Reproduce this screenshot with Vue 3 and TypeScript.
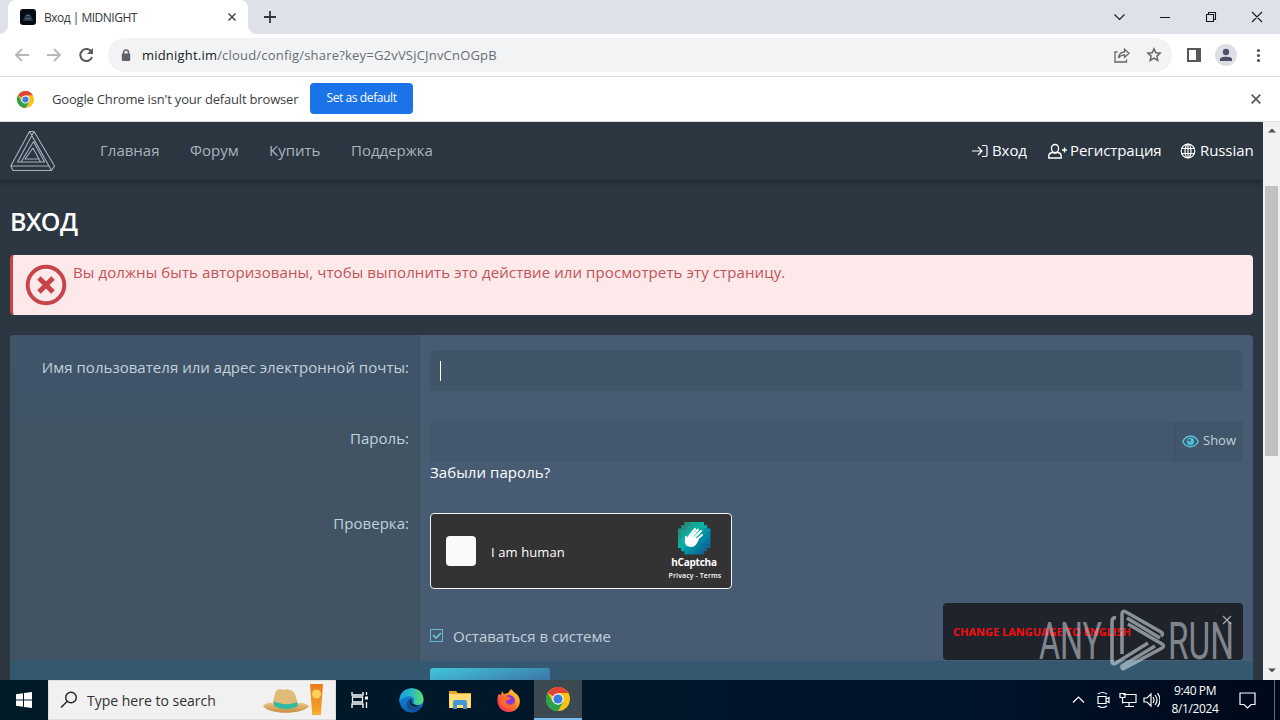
<script setup lang="ts">
const nav = [
  { label: 'Главная', cls: 'n1' },
  { label: 'Форум', cls: 'n2' },
  { label: 'Купить', cls: 'n3' },
  { label: 'Поддержка', cls: 'n4' },
]
const hPixels = [
  '..aabbcc..', '.aabbccdd.', 'aabbccddee', 'abbccddeef', 'abccddeeff',
  'bccddeeffg', 'bcddeeffgg', 'cddeeffggh', '.deeffggh.', '..effggh..',
].flatMap((row, y) => [...row].map((c, x) => ({ c, x, y }))).filter(p => p.c !== '.')
const shades: Record<string, string> = {
  a: '#259080', b: '#16a694', c: '#0eb4a4', d: '#05b3ad', e: '#0095a6', f: '#0086a2', g: '#0874a0', h: '#14648e',
}
</script>

<template>
  <div class="screen">
    <header class="tabstrip">
      <div class="tab">
        <svg class="favicon" width="16" height="16" viewBox="0 0 16 16"><rect width="16" height="16" rx="3" fill="#060c14" /><path d="M4 9c1-5 7-5 8 0l1 3H3z" fill="#243645" /><path d="M6 7q2-2 4 0M5 10q3-1 6 0" stroke="#587285" fill="none" /></svg>
        <span class="tabtitle">Вход | MIDNIGHT</span>
        <svg class="tabclose" width="8" height="8" viewBox="0 0 8 8"><path d="M.5.5l7 7m0-7l-7 7" stroke="#45494d" stroke-width="1.5" /></svg>
      </div>
      <svg class="plus" width="12" height="12" viewBox="0 0 12 12"><path d="M6 0v12M0 6h12" stroke="#34373a" stroke-width="1.8" /></svg>
      <svg class="wincontrols" width="154" height="14" viewBox="0 0 154 14"><g fill="none" stroke="#17191c" stroke-width="1.1"><path d="M1.500 4.500l5 5 5-5M47 7.500h10M93.500 4.500h7v7h-7zM95.500 4.500v-2h7v7h-2M139 2l10 10m0-10l-10 10" /></g></svg>
    </header>
    <div class="toolbar">
      <svg class="navicons" width="80" height="18" viewBox="0 0 80 18"><g fill="none" stroke-width="1.8"><path d="M15 9H2m6-6L2 9l6 6M33 9h13m-6-6l6 6-6 6" stroke="#b5b7b9" /><path d="M77.500 6A6 6 0 1 0 78 11" stroke="#55595d" stroke-width="2" /></g><path d="M79 2v6h-6z" fill="#55595d" /></svg>
      <div class="omnibox">
        <svg width="10" height="13" viewBox="0 0 10 13"><path d="M2.500 5V3.500a2.500 2.500 0 0 1 5 0V5" fill="none" stroke="#5f6368" stroke-width="1.500" /><rect x=".8" y="4.500" width="8.400" height="7.500" rx="1" fill="#5f6368" /></svg>
        <span class="url"><b>midnight.im</b>/cloud/config/share?key=G2vVSjCJnvCnOGpB</span>
        <svg class="share" width="48" height="18" viewBox="0 0 48 18"><g fill="none" stroke="#62666a" stroke-width="1.300"><path d="M3.500 6H1v10h11.500v-2.500M4.500 12c.5-4 2.500-6 6-6V3.200l4.500 4-4.500 4V8.800c-2.500 0-4.500.8-6 3.200z" /><path d="M40 2.800l1.800 4 4.300.4-3.200 2.900.9 4.300-3.800-2.200-3.800 2.200.9-4.300-3.200-2.900 4.300-.4z" stroke-width="1.500" /></g></svg>
      </div>
      <svg class="toolicons" width="78" height="24" viewBox="0 0 78 24"><path d="M1 5h14v14H1z" fill="#55595d" /><path d="M3 7h7v10H3z" fill="#fff" /><circle cx="40" cy="12" r="11" fill="#dcdfe6" /><circle cx="40" cy="9" r="3.200" fill="#4c5267" /><path d="M34 18v-2c0-3 12-3 12 0v2z" fill="#4c5267" /><g fill="#4e5256"><circle cx="72.500" cy="7.500" r="1.600" /><circle cx="72.500" cy="12.500" r="1.600" /><circle cx="72.500" cy="17.500" r="1.600" /></g></svg>
    </div>
    <div class="infobar">
      <svg class="chrome" width="17" height="17" viewBox="0 0 24 24"><circle cx="12" cy="12" r="12" fill="#fbc116" /><path d="M12 12L1.600 6A12 12 0 0 1 22.400 6H12z" fill="#df4538" /><path d="M12 12L6.800 15 1.600 6A12 12 0 0 0 12 24l5.200-9z" fill="#2ba24c" /><circle cx="12" cy="12" r="5.600" fill="#fff" /><circle cx="12" cy="12" r="4.400" fill="#3d7fe4" /></svg>
      <span class="infotext">Google Chrome isn't your default browser</span>
      <button><span>Set as default</span></button>
      <svg class="infoclose" width="10" height="10" viewBox="0 0 10 10"><path d="M.7.7l8.600 8.600m0-8.600L.7 9.300" stroke="#55595d" stroke-width="1.700" /></svg>
    </div>

    <div class="viewport">
      <main class="site">
        <nav class="navbar">
          <svg class="brand" width="47" height="43" viewBox="0 0 47 43"><g fill="none" stroke="#a4b2bc" stroke-width="1.100" stroke-linejoin="round"><path d="M19.500 1.500h4.500L44.500 36l-3 4.500H3L.8 36zM24 1.500L7.500 32h27L23.500 11.500M19.500 1.500L39 36M.8 36H39l2.500 4.500M23.500 11.500L11 32M23 18l-8 11h14.500M23 18l7.500 14M.8 36L3 40.500" /></g></svg>
          <a v-for="item in nav" :key="item.label" :class="item.cls"><span>{{ item.label }}</span></a>
          <div class="account">
            <svg width="16" height="14" viewBox="0 0 16 14"><path d="M0 7h10M6 3l4 4-4 4M10 1.500h3.500a1.500 1.500 0 0 1 1.500 1.500v8a1.500 1.500 0 0 1-1.500 1.500H10" fill="none" stroke="#fff" stroke-width="1.200" /></svg>
            <span class="login">Вход</span>
            <svg class="usericon" width="20" height="16" viewBox="0 0 20 16"><path d="M3.500 5a3.500 3.500 0 0 1 7 0v1a3.500 3.500 0 0 1-7 0zM4 9.500c-2 .5-3 1.500-3.200 3V15h12.400v-2.500c-.2-1.500-1.200-2.500-3.200-3-2 1-4 1-6 0zM16.500 4.500v5m-2.500-2.500h5" fill="none" stroke="#fff" stroke-width="1.350" /></svg>
            <span class="register">Регистрация</span>
            <svg class="globe" width="16" height="16" viewBox="0 0 16 16"><g fill="none" stroke="#fff" stroke-width="1.200"><circle cx="8" cy="8" r="6.800" /><ellipse cx="8" cy="8" rx="3" ry="6.800" /><path d="M1.500 5.500h13M1.500 10.500h13M8 1v14" /></g></svg>
            <span class="russian">Russian</span>
          </div>
        </nav>
        <section class="content">
          <h1><span>ВХОД</span></h1>
          <div class="alert">
            <svg width="42" height="42" viewBox="0 0 42 42"><circle cx="21" cy="21" r="18.300" fill="none" stroke="#c84448" stroke-width="3.900" /><path d="M14 14l14 14m0-14L14 28" stroke="#c84448" stroke-width="5" /></svg>
            <span>Вы должны быть авторизованы, чтобы выполнить это действие или просмотреть эту страницу.</span>
          </div>
          <form class="form" @submit.prevent>
            <div class="labels">
              <label class="lab1"><span>Имя пользователя или адрес электронной почты:</span></label>
              <label class="lab2"><span>Пароль:</span></label>
              <label class="lab3"><span>Проверка:</span></label>
            </div>
            <div class="fields">
              <div class="input user"><i></i></div>
              <div class="input password">
                <div class="show"><svg width="17" height="13" viewBox="0 0 17 13"><path d="M.8 6.500C4-.5 13-.5 16.200 6.500 13 13.500 4 13.500.8 6.500z" fill="none" stroke="#58c5db" stroke-width="1.400" /><circle cx="8.500" cy="6.500" r="3.700" fill="#4abdd3" /><circle cx="7.300" cy="5.200" r="1.300" fill="#42586b" /></svg><span>Show</span></div>
              </div>
              <a class="forgot"><span>Забыли пароль?</span></a>
              <div class="captcha">
                <div class="box"></div><span class="human">I am human</span>
                <div class="hbrand">
                  <svg width="34" height="34" viewBox="0 0 34 34" shape-rendering="geometricPrecision"><rect v-for="p in hPixels" :key="p.x + '-' + p.y" :x="p.x * 3.2 + 1" :y="p.y * 3.2 + 1" width="3.600" height="3.600" :fill="shades[p.c]" /><g fill="none" stroke="#fff" stroke-width="2.100" stroke-linecap="round"><path d="M11 17l7-9M13 18l8-9.500M16 18l8-8M19 19l6-5M9 20l0-4" /></g><path d="M8 19l4-4 7 2 3 1c-2 5-4 8-8 8s-7-3-6-7z" fill="#fff" /></svg>
                  <strong>hCaptcha</strong><small>Privacy - Terms</small>
                </div>
              </div>
              <div class="remember"><svg width="14" height="14" viewBox="0 0 14 14"><rect x=".5" y=".5" width="12" height="12" fill="none" stroke="#62bdd0" /><path d="M3 6l3 3 5-5" fill="none" stroke="#68c9dc" stroke-width="1.700" /></svg><span>Оставаться в системе</span></div>
            </div>
          </form>
          <div class="formfoot"><div class="submit"></div></div>
        </section>
      </main>
      <aside class="scrollbar"><svg width="8" height="5" viewBox="0 0 8 5"><path d="M0 4.500L4 .5l4 4z" fill="#505050" /></svg><div class="thumb"></div><svg class="down" width="8" height="5" viewBox="0 0 8 5"><path d="M0 .5l4 4 4-4z" fill="#505050" /></svg></aside>
    </div>

    <div class="toast"><span>CHANGE LANGUAGE TO ENGLISH</span><svg width="10" height="10" viewBox="0 0 10 10"><path d="M1 1l8 8m0-8L1 9" stroke="#aaa" stroke-width="1.200" /></svg></div>
    <svg class="watermark" width="200" height="72" viewBox="0 0 200 72">
      <g class="wmtext"><text x="3" y="54" textLength="63" lengthAdjust="spacingAndGlyphs">ANY</text><text x="132" y="54" textLength="66" lengthAdjust="spacingAndGlyphs">RUN</text></g>
      <g class="wmlogo"><path d="M80 12.500q-4 0-4 4V56q0 4 4 2l32-20M86 49V9q0-4 4-2l35 20q3 2 0 4M91 13l33 20M92 19l34 20q3 2 0 4L89 63q-4 2-3-2l33-20" /></g>
    </svg>

    <footer class="taskbar">
      <svg class="windows" width="16" height="16" viewBox="0 0 16 16"><path d="M0 2.300l7-1v6.200H0zM8 1.100L16 0v7.500H8zM0 8.500h7v6.200l-7-1zM8 8.500h8V16l-8-1.100z" fill="#fff" /></svg>
      <div class="search">
        <svg width="18" height="18" viewBox="0 0 18 18"><circle cx="11" cy="6.500" r="5.300" fill="none" stroke="#222" stroke-width="1.400" /><path d="M7 10.500L1 16.500" stroke="#222" stroke-width="1.400" /></svg>
        <span>Type here to search</span>
        <svg class="summer" width="64" height="36" viewBox="0 0 64 36">
          <defs><linearGradient id="straw" x2="0" y2="1"><stop stop-color="#e7c47f" /><stop offset="1" stop-color="#c78e45" /></linearGradient><linearGradient id="cream" x2="0" y2="1"><stop stop-color="#eb7a19" /><stop offset="1" stop-color="#f4a428" /></linearGradient></defs>
          <path d="M0 24c4-4 9-4 13-2h20c5-2 9-1 13 2-5 9-41 9-46 0z" fill="url(#straw)" /><path d="M10 22c1-10 3-15 7-15 4 2 5-1 10 1 5 1 6 7 8 14-7 4-18 4-25 0z" fill="#dfba79" /><path d="M11 19c7 4 16 4 23 1l1 4c-7 4-17 4-24 0z" fill="#32b9a1" /><path d="M47 2h13l-2 28h-9z" fill="url(#cream)" /><circle cx="53.500" cy="12" r="4.500" fill="#ffd15c" /><path d="M49 30h9v3h-9z" fill="#f5b039" />
        </svg>
      </div>
      <div class="slot"><svg width="18" height="18" viewBox="0 0 18 18"><path d="M1 1v3h11V1M1 17v-4h11v4M1.500 6h10v5h-10zM15.500 1v3M15.500 11v6" fill="none" stroke="#fff" stroke-width="1.300" /><path d="M14 5.500h3v3h-3z" fill="#fff" /></svg></div>
      <div class="slot edge"><svg width="25" height="25" viewBox="0 0 25 25"><defs><linearGradient id="edgeTop"><stop stop-color="#1b9be0" /><stop offset=".5" stop-color="#2abbc5" /><stop offset="1" stop-color="#5ddd68" /></linearGradient><linearGradient id="edgeLow" x2="0" y2="1"><stop stop-color="#168fd9" /><stop offset="1" stop-color="#0b61b4" /></linearGradient></defs><circle cx="12.500" cy="12.500" r="12" fill="url(#edgeLow)" /><path d="M.5 11C2-4 25-3 24.500 12c-.5 5-6 6-9 4-2-1-.5-2-.5-4 0-3-4-5-8-3-3 1-5 2-6.500 5z" fill="url(#edgeTop)" /><path d="M12 11c-2 4 2 9 10 7-5 8-15 5-14-2 0-3 2-5 4-5z" fill="#134d8b" /><path d="M13 11c-2 4 1 7 8 6-4 3-10 1-10-3 0-2 1-3 2-3z" fill="#001b28" /></svg></div>
      <div class="slot folder"><svg width="22" height="20" viewBox="0 0 22 20"><path d="M0 1h7l2 2h13v15H0z" fill="#e7a827" /><path d="M0 4h22v14H0z" fill="#ffdc74" /><path d="M4 19v-7q0-2 2-2h10q2 0 2 2v7h-4v-4H8v4z" fill="#4497d2" /></svg></div>
      <div class="slot firefox"><svg width="24" height="24" viewBox="0 0 24 24"><defs><linearGradient id="fire" x1="1" x2="0" y2="1"><stop stop-color="#ffea38" /><stop offset=".45" stop-color="#ff8425" /><stop offset=".75" stop-color="#ff3e4b" /><stop offset="1" stop-color="#e4268e" /></linearGradient></defs><path d="M5 3l2 3 4-1 3-4 4 4c8 4 6 18-5 19C1 25-2 12 2 6l2 1z" fill="url(#fire)" /><circle cx="12" cy="13" r="6" fill="#8537d8" /><path d="M4 10c4-4 7-1 10 0-1 3-5 1-5 4 1 4 7 3 8 0 2 7-11 10-14 0z" fill="#ff6a2a" /></svg></div>
      <div class="slot active"><svg width="24" height="24" viewBox="0 0 24 24"><circle cx="12" cy="12" r="12" fill="#fbc116" /><path d="M12 12L1.600 6A12 12 0 0 1 22.400 6H12z" fill="#e24435" /><path d="M12 12L6.800 15 1.600 6A12 12 0 0 0 12 24l5.200-9z" fill="#2ba24c" /><circle cx="12" cy="12" r="5.700" fill="#fff" /><circle cx="12" cy="12" r="4.600" fill="#397be3" /></svg></div>
      <svg class="tray" width="88" height="20" viewBox="0 0 88 20"><g fill="none" stroke="#fff" stroke-width="1.200"><path d="M1 12.500l5.500-5.500 5.500 5.500M26 6.500h8v7h-8zM34 9l3-1.500v5L34 11M26 4q4.500-3 9 0M26 16q4.500 3 9 0M51 4.500h13v8H51M57 12.500v4m-4 0h9M48 3.500h5v4h-5zM50.500 7.500v6M72 8h3l4-4v12l-4-4h-3zM81 7q2 3 0 6M83 5q4 5 0 10M85.500 3q5 7 0 14" /></g></svg>
      <div class="clock"><span>9:40 PM</span><span>8/1/2024</span></div>
      <svg class="notice" width="18" height="17" viewBox="0 0 18 17"><path d="M1 1h15v11.500h-4L8.500 16 5 12.500H1z" fill="none" stroke="#fff" stroke-width="1.200" /></svg>
      <div class="desktop"></div>
    </footer>
  </div>
</template>

<style>
body { margin: 0; overflow: hidden; }
</style>
<style scoped>
* { box-sizing: border-box; }
.screen { width: 1280px; height: 720px; position: relative; overflow: hidden; display: flex; flex-direction: column; font-family: "Open Sans", "Noto Sans", sans-serif; }
svg { display: block; flex-shrink: 0; }
span { white-space: nowrap; }
.tabstrip { height: 34px; background: #dee1e8; display: flex; align-items: center; }
.tab { height: 34px; width: 240px; margin-left: 8px; background: #fff; border-radius: 8px 8px 0 0; display: flex; align-items: center; position: relative; }
.tab::before, .tab::after { content: ""; position: absolute; bottom: 0; width: 8px; height: 8px; }
.tab::before { left: -8px; background: radial-gradient(circle at 0 0, #dee1e8 7.500px, #fff 8px); }
.tab::after { right: -8px; background: radial-gradient(circle at 100% 0, #dee1e8 7.500px, #fff 8px); }
.favicon { margin-left: 12px; }
.tabtitle { margin-left: 8px; width: 184px; color: #35383b; font-size: 12px; letter-spacing: -.5px; }
.plus { margin-left: 16px; }
.wincontrols { margin-left: auto; margin-right: 13px; }
.toolbar { height: 43px; background: #fff; border-bottom: 1px solid #dce1e3; display: flex; align-items: center; }
.navicons { margin-left: 14px; width: 80px; }
.omnibox { width: 1064px; height: 34px; margin-left: 14px; padding: 0 10px 0 13px; border-radius: 17px; background: #f1f3f4; display: flex; align-items: center; }
.url { margin-left: 11px; color: #696d71; font-size: 13px; letter-spacing: .2px; }
.url b { font-weight: 400; color: #202124; }
.share { margin-left: auto; }
.toolicons { margin-left: 14px; }
.infobar { height: 45px; background: #fff; border-bottom: 1px solid #dce5e6; display: flex; align-items: center; }
.chrome { margin-left: 17px; }
.infotext { margin-left: 18px; width: 258px; font-size: 13px; color: #3b3e41; letter-spacing: -.18px; }
button { border: 0; background: #1a73e8; color: #fff; width: 103px; height: 31px; border-radius: 4px; font: 12px/29px "Open Sans", sans-serif; padding: 0 0 2px; margin-top: -2px; letter-spacing: -.4px; }
.infoclose { margin-left: auto; margin-right: 19px; }
.viewport { height: 558px; display: flex; }
.site { width: 1263px; height: 558px; background: #2c3742; display: flex; flex-direction: column; overflow: hidden; }
.navbar { height: 58px; flex-shrink: 0; display: flex; align-items: center; color: #a9b4bd; font-size: 15px; box-shadow: 0 2px 6px #1b252d; background: #2b3641; position: relative; }
.navbar span { padding-bottom: 2px; }
.navbar > a { padding-bottom: 2px; }
.brand { margin-left: 10px; }
.n1 { width: 90px; margin-left: 43px; }.n2 { width: 79px; }.n3 { width: 82px; }
.account { margin-left: auto; margin-right: 10px; display: flex; align-items: center; color: #fff; letter-spacing: -.08px; }
.login { margin-left: 4px; width: 56px; }.register { margin-left: 2px; width: 110px; }.russian { margin-left: 4px; width: 53px; }
.content { padding: 24px 10px 0; display: flex; flex-direction: column; }
h1 { margin: 0; height: 36px; line-height: 35px; font-size: 25px; font-weight: 600; color: #fff; letter-spacing: -.6px; }
.alert { height: 60px; margin-top: 15px; border-left: 3px solid #c84448; border-radius: 4px; background: #fde9ea; color: #c15357; display: flex; padding: 9px 12px; font-size: 15px; letter-spacing: .1px; }
.alert span { margin-left: 6px; line-height: 17px; }
.form { height: 326px; margin-top: 20px; display: flex; border-radius: 4px 4px 0 0; overflow: hidden; background: #475b72; }
.labels { width: 410px; background: linear-gradient(#40546a 0, #405468 76px, #405464 90px); border-right: 1px solid #3d5060; text-align: right; padding-right: 10px; color: #c2d1dc; font-size: 15px; letter-spacing: .03px; display: flex; flex-direction: column; }
.labels label { line-height: 24px; }.lab1 { margin-top: 20px; }.lab2 { margin-top: 47px; }.lab3 { margin-top: 61px; }
.fields { flex: 1; padding: 15px 10px 0; color: #c2d1dc; font-size: 15px; }
.input { height: 41px; background: #405567; border-radius: 4px; }
.user { padding: 11px 10px; }.user i { display: block; width: 1px; height: 20px; background: #fff; }
.password { background: #43586d; margin-top: 30px; display: flex; justify-content: flex-end; }
.show { width: 69px; border-left: 1px solid #405365; background: #41566a; display: flex; align-items: center; padding-left: 7px; font-size: 13px; }
.show span { margin-left: 4px; padding-bottom: 3px; }
.forgot { display: block; height: 24px; margin-top: -2px; line-height: 24px; color: #fff; font-size: 15px; letter-spacing: .07px; }
.captcha { width: 302px; height: 76px; margin-top: 29px; border: 1px solid #f0f4f6; border-radius: 4px; background: #333; color: #fff; display: flex; align-items: center; padding-left: 15px; }
.box { width: 30px; height: 30px; border-radius: 4px; background: #fafafa; }
.human { margin-left: 15px; margin-top: 2px; font-size: 13px; letter-spacing: .1px; }
.hbrand { margin-left: auto; margin-right: 7px; width: 60px; display: flex; flex-direction: column; align-items: center; }
.hbrand strong { font-size: 10px; line-height: 12px; margin-top: 1px; font-weight: 700; letter-spacing: -.25px; }
.hbrand small { font-size: 7px; line-height: 11px; margin-top: 2px; margin-left: 2px; font-weight: 600; white-space: nowrap; letter-spacing: .1px; }
.remember { margin-top: 35px; height: 24px; display: flex; align-items: center; }
.remember span { margin-left: 9px; }
.formfoot { height: 19px; background: #33586f; padding: 7px 10px 0 420px; }
.submit { height: 12px; width: 120px; border-radius: 3px 3px 0 0; background: linear-gradient(165deg, #41c6df, #3c75a7); }
.scrollbar { width: 17px; background: #f1f1f1; display: flex; flex-direction: column; align-items: center; padding: 6px 0 7px; }
.thumb { width: 13px; height: 270px; margin-top: 53px; background: #c1c1c1; }.down { margin-top: auto; }
.toast { position: absolute; left: 943px; top: 603px; width: 300px; height: 57px; background: #1f242c; border-radius: 4px; }
.toast span { position: absolute; left: 10px; top: 21px; color: #fa0b0e; font-size: 11px; line-height: 16px; font-weight: 700; }
.toast svg { position: absolute; right: 11px; top: 12px; }
.watermark { position: absolute; left: 1036px; top: 605px; overflow: visible; }
.wmtext { font-family: Roboto, sans-serif; font-size: 51px; fill: #c2c9ce; fill-opacity: .6; font-weight: 400; }
.wmlogo { fill: none; stroke: #d5e0e6; stroke-opacity: .58; stroke-width: 3.500px; stroke-linejoin: round; }
.taskbar { height: 40px; background: linear-gradient(90deg, #001b28, #00142a 75%, #00091b); display: flex; align-items: center; color: #fff; }
.windows { margin: 0 16px; }
.search { width: 288px; height: 40px; background: #f1f1f1; border: 1px solid #ddd; color: #303030; font-size: 14px; display: flex; align-items: center; padding-left: 11px; }
.search > span { margin-left: 9px; }.summer { margin-left: auto; margin-right: 8px; }
.slot { width: 48px; height: 40px; display: flex; align-items: center; justify-content: center; }
.edge { margin-left: 3px; }.folder, .firefox, .active { margin-left: 1px; }.active { background: #3b4951; border-bottom: 2px solid #76b9ed; }
.tray { margin-left: auto; }
.clock { width: 62px; margin-left: 4px; font: 12px/18px "Open Sans", sans-serif; display: flex; flex-direction: column; align-items: center; letter-spacing: -.4px; }
.notice { margin-left: 13px; }
.desktop { margin-left: 17px; width: 6px; height: 40px; border-left: 1px solid #607081; }
</style>
